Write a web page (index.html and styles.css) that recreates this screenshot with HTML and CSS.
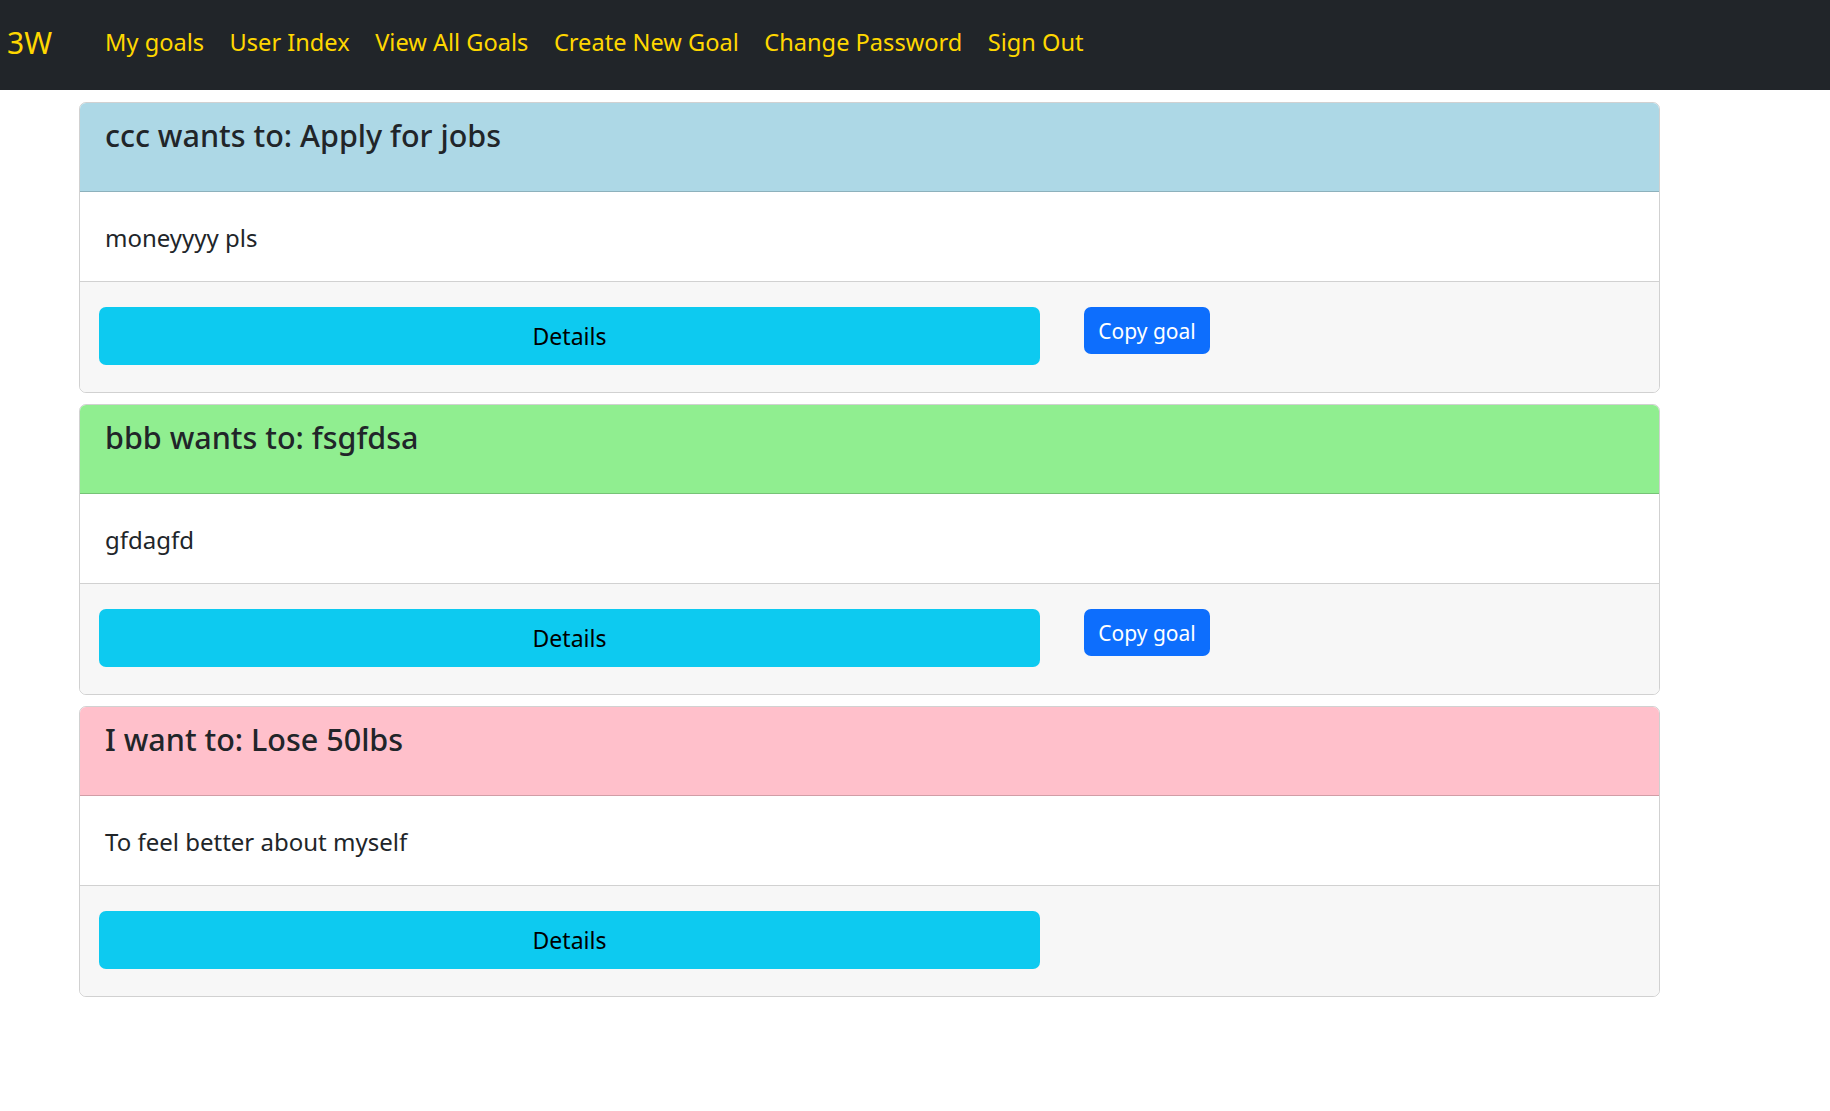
FILE: index.html
```html
<!DOCTYPE html>
<html lang="en">
<head>
<meta charset="utf-8">
<title>3W - Goals</title>
<link rel="stylesheet" href="styles.css">
</head>
<body>
<nav class="navbar">
  <a class="brand" href="#">3W</a>
  <ul class="nav-links">
    <li><a href="#">My goals</a></li>
    <li><a href="#">User Index</a></li>
    <li><a href="#">View All Goals</a></li>
    <li><a href="#">Create New Goal</a></li>
    <li><a href="#">Change Password</a></li>
    <li><a href="#">Sign Out</a></li>
  </ul>
</nav>
<main class="goals">
  <section class="card">
    <header class="card-header header-blue"><h3>ccc wants to: Apply for jobs</h3></header>
    <div class="card-body"><p>moneyyyy pls</p></div>
    <footer class="card-footer">
      <a class="btn btn-details" href="#">Details</a>
      <a class="btn btn-copy" href="#">Copy goal</a>
    </footer>
  </section>
  <section class="card">
    <header class="card-header header-green"><h3>bbb wants to: fsgfdsa</h3></header>
    <div class="card-body"><p>gfdagfd</p></div>
    <footer class="card-footer">
      <a class="btn btn-details" href="#">Details</a>
      <a class="btn btn-copy" href="#">Copy goal</a>
    </footer>
  </section>
  <section class="card">
    <header class="card-header header-pink"><h3>I want to: Lose 50lbs</h3></header>
    <div class="card-body"><p>To feel better about myself</p></div>
    <footer class="card-footer">
      <a class="btn btn-details" href="#">Details</a>
    </footer>
  </section>
</main>
</body>
</html>
```
FILE: styles.css
```css
* { box-sizing: border-box; }
html, body { margin: 0; padding: 0; }
body {
  font-family: "Noto Sans", "Open Sans", sans-serif;
  color: #212529;
  background: #fff;
}
a { text-decoration: none; }

.navbar {
  display: flex;
  align-items: center;
  height: 90px;
  background: #212529;
  padding: 0 0 5px 7px;
}
.brand {
  color: #ffd700;
  font-size: 30px;
  line-height: 1;
  margin-right: 53px;
}
.nav-links {
  display: flex;
  gap: 25.5px;
  list-style: none;
  margin: 0;
  padding: 0;
}
.nav-links a {
  color: #ffd700;
  font-size: 23.6px;
  line-height: 1.5;
}

.goals {
  display: flex;
  flex-direction: column;
  gap: 11px;
  width: 1581px;
  margin: 12px 0 0 79px;
}
.card {
  border: 1px solid rgba(0, 0, 0, 0.18);
  border-radius: 7px;
  overflow: hidden;
}
.card-header {
  height: 89px;
  padding: 12px 25px 0;
  border-bottom: 1px solid rgba(0, 0, 0, 0.18);
}
.card-header h3 {
  margin: 0;
  font-size: 30.5px;
  font-weight: 500;
  line-height: 40px;
}
.header-blue { background: #add8e6; }
.header-green { background: #90ee90; }
.header-pink { background: #ffc0cb; }

.card-body {
  height: 90px;
  padding: 28px 25px 0;
  border-bottom: 1px solid rgba(0, 0, 0, 0.18);
}
.card-body p {
  margin: 0;
  font-size: 24px;
  line-height: 36px;
}
.card-footer {
  display: flex;
  align-items: flex-start;
  gap: 44px;
  height: 110px;
  padding: 25px 19px 0;
  background: #f7f7f7;
}
.btn {
  display: inline-flex;
  align-items: center;
  justify-content: center;
  border-radius: 7px;
  font-size: 21px;
}
.btn-details {
  width: 941px;
  height: 58px;
  background: #0dcaf0;
  color: #000;
  font-size: 23px;
}
.btn-copy {
  width: 126px;
  height: 47px;
  background: #0d6efd;
  color: #fff;
}
```
